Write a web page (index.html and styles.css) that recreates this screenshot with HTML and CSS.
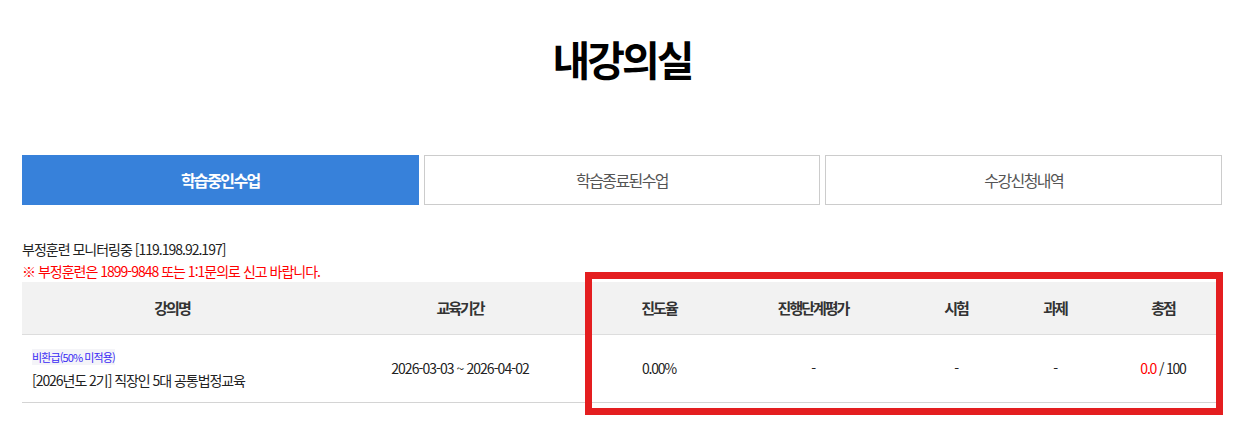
FILE: index.html
```html
<!DOCTYPE html>
<html lang="ko">
<head>
<meta charset="utf-8">
<title>내강의실</title>
<link rel="stylesheet" href="styles.css">
</head>
<body>
<div class="page">
  <h1 class="title">내강의실</h1>
  <div class="tabs">
    <a class="tab active">학습중인수업</a>
    <a class="tab">학습종료된수업</a>
    <a class="tab">수강신청내역</a>
  </div>
  <div class="notice">
    <p class="monitor">부정훈련 모니터링중 [119.198.92.197]</p>
    <p class="warn">※ 부정훈련은 1899-9848 또는 1:1문의로 신고 바랍니다.</p>
  </div>
  <div class="table-wrap">
    <table class="list">
      <colgroup>
        <col class="c1"><col class="c2"><col class="c3"><col class="c4"><col class="c5"><col class="c6"><col class="c7">
      </colgroup>
      <thead>
        <tr>
          <th>강의명</th><th>교육기간</th><th>진도율</th><th>진행단계평가</th><th>시험</th><th>과제</th><th>총점</th>
        </tr>
      </thead>
      <tbody>
        <tr>
          <td class="name">
            <span class="badge">비환급(50% 미적용)</span>
            <span class="course">[2026년도 2기] 직장인 5대 공통법정교육</span>
          </td>
          <td class="date">2026-03-03 ~ 2026-04-02</td>
          <td>0.00%</td>
          <td>-</td>
          <td>-</td>
          <td>-</td>
          <td><span class="score">0.0</span> / 100</td>
        </tr>
      </tbody>
    </table>
    <div class="highlight"></div>
  </div>
</div>
</body>
</html>
```
FILE: styles.css
```css
* { box-sizing: border-box; }
html, body { margin: 0; padding: 0; background: #fff; }
body {
  font-family: "Noto Sans CJK KR", "Noto Sans", sans-serif;
  color: #222;
  min-height: 100vh;
}
.page {
  width: 1200px;
  margin-left: 22px;
  padding-bottom: 18px;
}
.title {
  margin: 0;
  padding-top: 28px;
  height: 155px;
  text-align: center;
  font-size: 41px;
  font-weight: 700;
  letter-spacing: -3px;
  line-height: 60px;
  color: #000;
}
.tabs {
  display: flex;
  gap: 5px;
}
.tab {
  flex: 1;
  height: 50px;
  display: flex;
  align-items: center;
  justify-content: center;
  border: 1px solid #ccc;
  font-size: 16px;
  letter-spacing: -1.6px;
  color: #555;
}
.tab.active {
  background: #3781da;
  border-color: #3781da;
  color: #fff;
  font-weight: 700;
}
.notice {
  padding-top: 33px;
}
.notice p {
  margin: 0;
  font-size: 14px;
  letter-spacing: -1px;
  line-height: 22px;
}
.monitor { color: #222; }
.warn { color: #ff0000; }
.table-wrap {
  position: relative;
}
.list {
  width: 1200px;
  border-collapse: collapse;
  table-layout: fixed;
  font-size: 14px;
  letter-spacing: -1.2px;
}
.c1 { width: 300px; }
.c2 { width: 276px; }
.c3 { width: 122px; }
.c4 { width: 186px; }
.c5 { width: 100px; }
.c6 { width: 98px; }
.c7 { width: 118px; }
.list th {
  height: 52px;
  background: #f2f2f2;
  border-bottom: 1px solid #dddddd;
  font-weight: 700;
  color: #333;
  font-size: 15px;
  letter-spacing: -2px;
  padding: 0;
}
.list td {
  height: 68px;
  text-align: center;
  border-bottom: 1px solid #d4d4d4;
  padding: 0;
  color: #222;
}
.list td.date {
  letter-spacing: -0.95px;
}
.list td.name {
  text-align: left;
  padding-left: 10px;
}
.badge {
  display: inline-block;
  font-size: 11px;
  letter-spacing: -0.9px;
  color: #3b2cf5;
  background: #f4f4f8;
  line-height: 16px;
}
.course {
  display: block;
  margin-top: 4px;
  line-height: 20px;
  letter-spacing: -1.05px;
}
.score { color: #ff0000; }
.highlight {
  position: absolute;
  left: 563px;
  right: -1px;
  top: -10px;
  bottom: -12px;
  border: 7px solid #e41e20;
  pointer-events: none;
}
```
